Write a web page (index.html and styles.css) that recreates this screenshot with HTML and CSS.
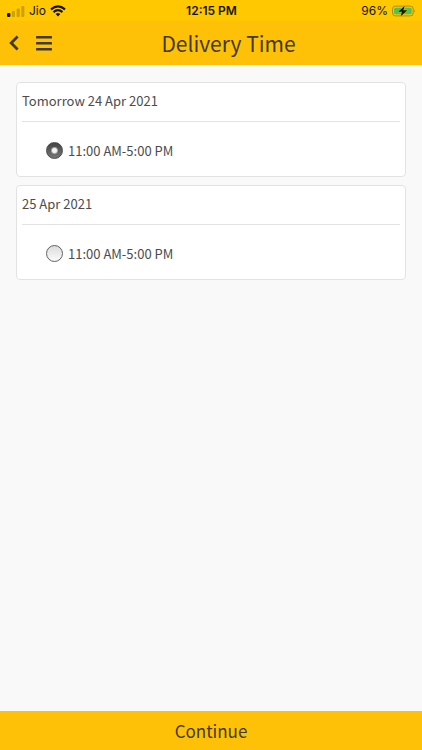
FILE: index.html
```html
<!DOCTYPE html>
<html lang="en">
<head>
<meta charset="utf-8">
<meta name="viewport" content="width=device-width, initial-scale=1">
<title>Delivery Time</title>
<link rel="stylesheet" href="styles.css">
</head>
<body>
<div class="status">
  <div class="status-side">
    <svg class="signal" viewBox="0 0 18 12" aria-hidden="true">
      <rect x="0" y="8" width="3.4" height="4" rx="1" fill="#171400"/>
      <g fill="#cfa00a"><rect x="4.8" y="6" width="3.2" height="6" rx="1"/><rect x="9.6" y="3.4" width="3.2" height="8.6" rx="1"/><rect x="14.2" y="1" width="3.2" height="11" rx="1"/></g>
    </svg>
    <span>Jio</span>
    <svg class="wifi" viewBox="0 0 16 12" aria-hidden="true">
      <g fill="none" stroke="#171400" stroke-width="2.1"><path d="M1 4.4Q8-1.8 15 4.4"/><path d="M3.5 7.1Q8 3.2 12.5 7.1"/></g>
      <path d="M5.7 9Q8 7.1 10.3 9L8 11.5Z" fill="#171400"/>
    </svg>
  </div>
  <time class="clock">12:15 PM</time>
  <div class="status-side status-end">
    <span>96%</span>
    <svg class="battery" viewBox="0 0 25 12" aria-hidden="true">
      <rect x=".6" y=".9" width="21.5" height="10.2" rx="3" fill="none" stroke="#a58a16"/>
      <rect x="2.2" y="2.5" width="18.3" height="7" rx="1.6" fill="#4fc252"/>
      <path d="M23.3 4.3Q25 6 23.3 7.7Z" fill="#a58a16"/>
      <path d="M13.3 .5L6.4 6.8H10.4L8.8 11.6L16 5.2H11.8Z" fill="#171400" stroke="#ffc805" stroke-width="1" paint-order="stroke"/>
    </svg>
  </div>
</div>
<header class="header">
  <button class="icon-button" type="button" aria-label="Back">
    <svg class="back" viewBox="0 0 10 16" aria-hidden="true"><path d="M8.6 1.6L2.2 8L8.6 14.4" fill="none" stroke="#423b1d" stroke-width="2.8"/></svg>
  </button>
  <button class="icon-button" type="button" aria-label="Menu">
    <svg class="menu" viewBox="0 0 16 16" aria-hidden="true"><g fill="#423b1d"><rect y="1" width="16" height="2.5" rx=".6"/><rect y="7" width="16" height="2.5" rx=".6"/><rect y="13" width="16" height="2.5" rx=".6"/></g></svg>
  </button>
  <h1 class="title">Delivery Time</h1>
</header>
<form class="page">
  <main class="slots">
    <fieldset class="card" aria-labelledby="day1">
      <h2 class="day" id="day1">Tomorrow 24 Apr 2021</h2>
      <label class="slot"><input class="radio" type="radio" name="slot" value="24" checked><span>11:00 AM-5:00 PM</span></label>
    </fieldset>
    <fieldset class="card" aria-labelledby="day2">
      <h2 class="day" id="day2">25 Apr 2021</h2>
      <label class="slot"><input class="radio" type="radio" name="slot" value="25"><span>11:00 AM-5:00 PM</span></label>
    </fieldset>
  </main>
  <button class="continue" type="submit">Continue</button>
</form>
</body>
</html>
```
FILE: styles.css
```css
* {
  box-sizing: border-box;
}

body {
  display: flex;
  flex-direction: column;
  min-height: 100vh;
  margin: 0;
  background: #f9f9f9;
  color: #4c4c4c;
  font-family: "Noto Sans CJK SC", sans-serif;
  font-size: 13px;
}

button {
  border: 0;
  font-family: inherit;
}

svg {
  display: block;
}

.status {
  display: flex;
  align-items: center;
  height: 21px;
  padding: 0 6px 0 7px;
  background: #ffc800;
  color: #171400;
  font-family: Inter, sans-serif;
  font-size: 12px;
}

.status-side {
  display: flex;
  flex: 1;
  align-items: center;
  gap: 4px;
}

.status-end {
  justify-content: flex-end;
}

.clock {
  font-weight: 600;
}

.signal {
  width: 18px;
  height: 12px;
}

.wifi {
  width: 16px;
  height: 12px;
}

.battery {
  width: 24px;
  height: 12px;
}

.header {
  display: flex;
  align-items: center;
  height: 44px;
  padding: 0 17px 0 9px;
  background: #ffc107;
}

.icon-button {
  padding: 0;
  background: none;
}

.icon-button + .icon-button {
  margin-left: 17px;
}

.back {
  width: 10px;
  height: 16px;
}

.menu {
  width: 16px;
  height: 16px;
}

.title {
  flex: 1;
  margin: 0;
  color: #423b1d;
  font-size: 21px;
  font-weight: 400;
  line-height: 32px;
  text-align: center;
}

.page {
  display: flex;
  flex: 1;
  flex-direction: column;
}

.slots {
  display: flex;
  flex: 1;
  flex-direction: column;
  gap: 8px;
  padding: 17px 16px;
}

.card {
  min-width: 0;
  margin: 0;
  padding: 8px 5px 13px;
  border: 1px solid #e2e2e2;
  border-radius: 4px;
  background: #fff;
}

.day {
  margin: 0;
  padding-bottom: 10px;
  border-bottom: 1px solid #e2e2e2;
  font-size: 13px;
  font-weight: 400;
  line-height: 20px;
}

.slot {
  display: flex;
  align-items: center;
  gap: 5px;
  margin-top: 17px;
  padding-left: 24px;
  line-height: 24px;
}

.radio {
  width: 17px;
  height: 17px;
  margin: 0 0 2px;
  border: 1px solid #606060;
  border-radius: 50%;
  appearance: none;
  background: linear-gradient(#dcdcdc, #fafafa);
}

.radio:checked {
  border-color: #4a4a4a;
  background: radial-gradient(circle, #f4f4f4 2px, transparent 4px), linear-gradient(#444, #777);
}

.continue {
  height: 39px;
  padding: 0;
  background: #ffc107;
  color: #423b1d;
  font-size: 17px;
  line-height: 26px;
}
```
